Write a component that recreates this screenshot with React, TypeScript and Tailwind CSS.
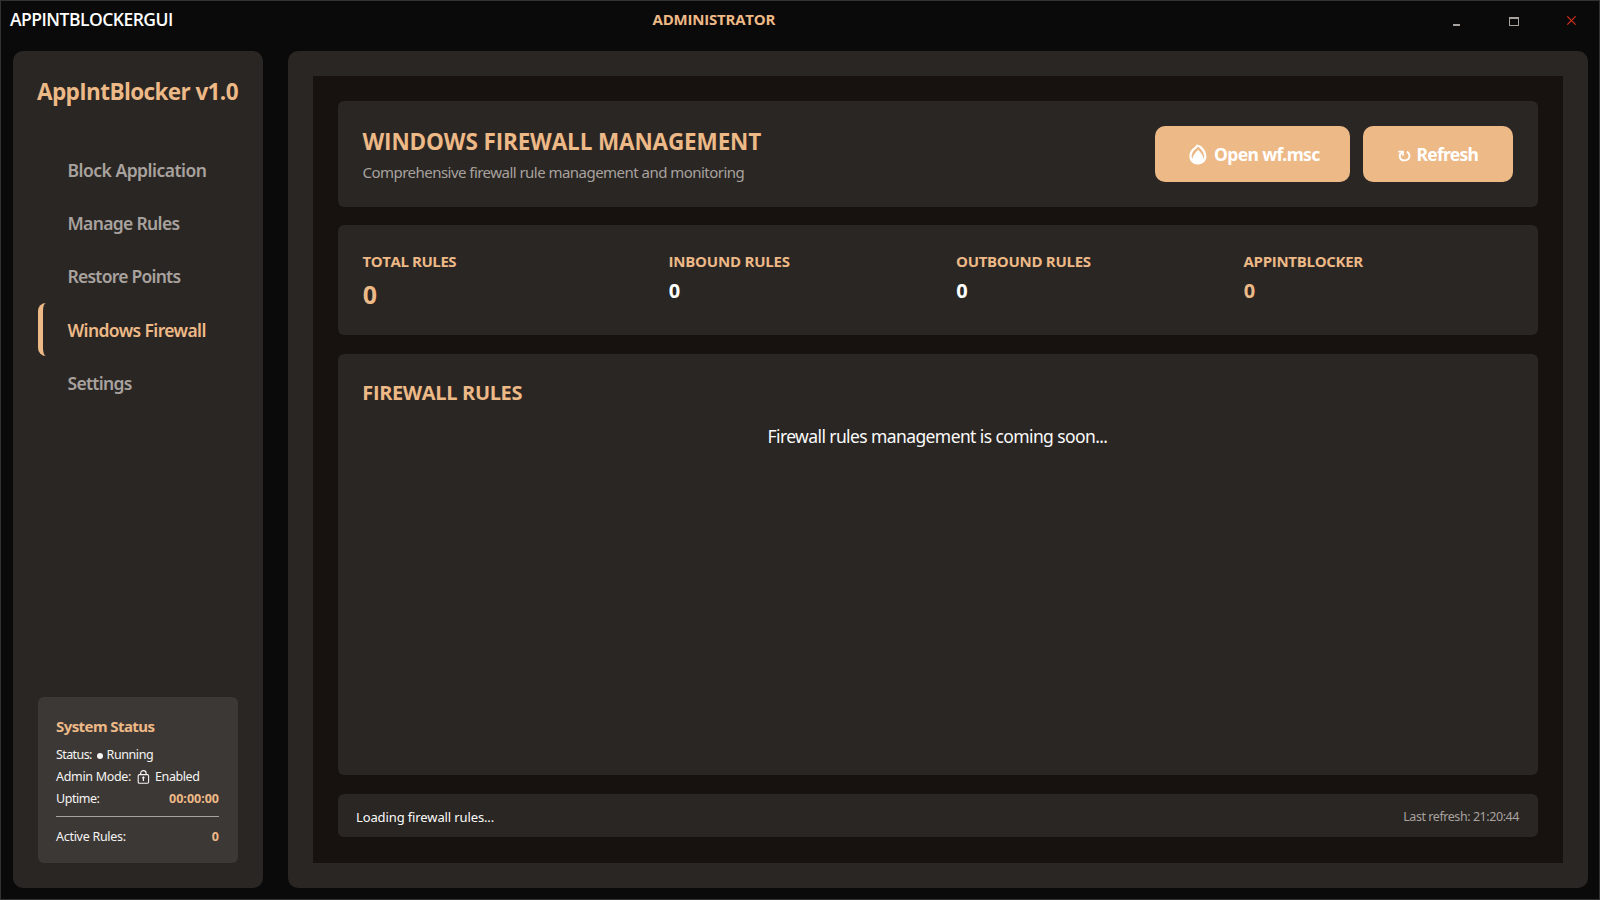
import type { ReactNode } from "react";

function Flame() {
  return (
    <svg width="18" height="21" viewBox="0 0 18 21" fill="none">
      <path
        d="M7.6 0.4 C9.4 0.6 11.2 1.2 12.6 2.6 C15.4 5.3 17.4 8.8 17.4 12.3 C17.4 17.2 13.8 20.4 9 20.4 C4.2 20.4 0.4 17.2 0.4 12.4 C0.4 9 1.8 6.4 3.8 4.6 C5.4 3.2 6.8 2.2 7.6 0.4 Z"
        fill="#fff"
      />
      <path
        d="M8.9 2.5 C11.6 4.2 15.2 8.4 15.2 12.6 C15.2 13.6 15 14.4 14.6 15 C14.2 12 12 9 9.2 6 C6.2 9 3.8 12 3.4 15 C2.8 14.2 2.6 13.4 2.6 12.4 C2.6 9.6 3.8 7.4 5.5 5.9 C7 4.6 8.3 3.8 8.9 2.5 Z"
        fill="#edb987"
      />
      <path d="M9.1 6.2 C11.7 8.8 14.2 11.6 14.2 14.8 C14.2 17.6 12 19.2 9 19.2 C6 19.2 3.8 17.6 3.8 14.8 C3.8 11.6 6.5 8.8 9.1 6.2 Z" fill="#fff" />
    </svg>
  );
}

function Reload() {
  return (
    <svg width="13" height="12" viewBox="0 0 13 12" fill="none" stroke="#fff">
      <path d="M4.4 2.4 C2.2 3.6 1.4 5.6 1.9 7.4 C2.5 9.5 4.2 10.4 6.3 10.4 C9.4 10.4 11.5 8.6 11.5 6 C11.5 4.2 10.6 2.6 9 1.6" strokeWidth="1.9" />
      <path d="M0.3 1.6 H5 V5.8" strokeWidth="1.6" />
    </svg>
  );
}

function Lock() {
  return (
    <svg width="13" height="14" viewBox="0 0 13 14" fill="none" stroke="#f5f5f4">
      <rect x="1.2" y="4.6" width="10.4" height="8.6" rx="1.2" strokeWidth="1.1" />
      <path d="M3.7 4.6 V3.2 C3.7 1.6 4.8 0.7 6.4 0.7 C8 0.7 9.1 1.6 9.1 3.2 V4.6" strokeWidth="1.2" />
      <path d="M6.4 7 V11" strokeWidth="1.2" />
      <circle cx="6.4" cy="7.6" r="0.9" fill="#f5f5f4" strokeWidth="0.6" />
    </svg>
  );
}

const navItems = [
  { label: "Block Application", style: "tracking-[-0.5px]" },
  { label: "Manage Rules", style: "tracking-[-0.66px]" },
  { label: "Restore Points", style: "tracking-[-0.76px]" },
  { label: "Windows Firewall", style: "tracking-[-0.61px]", active: true },
  { label: "Settings", style: "tracking-[-0.7px]" },
];

const stats = [
  { label: "TOTAL RULES", track: "tracking-[-0.43px]", cell: "", value: "text-[25px] leading-[34px] text-[#edb987]" },
  { label: "INBOUND RULES", track: "tracking-[-0.22px]", cell: "pl-[18.5px]", value: "text-[20px] leading-[27px] text-white" },
  { label: "OUTBOUND RULES", track: "tracking-[-0.3px]", cell: "pl-[18.5px]", value: "text-[20px] leading-[27px] text-white" },
  { label: "APPINTBLOCKER", track: "tracking-[-0.3px]", cell: "pl-[18.5px]", value: "text-[20px] leading-[27px] text-[#edb987]" },
];

function TitleBar() {
  return (
    <header className="flex h-[50px] shrink-0 items-start font-['Open_Sans',sans-serif]">
      <h1 className="w-[642.5px] pt-[8px] pl-[9px] text-[17.5px] leading-5 font-semibold tracking-[-0.52px] text-white">APPINTBLOCKERGUI</h1>
      <span className="pt-[8px] pl-[9px] text-[15px] leading-5 font-bold tracking-[-0.21px] text-[#edb987]">ADMINISTRATOR</span>
      <div className="ml-auto flex h-[41px] items-start pr-[23px] pt-[14px]">
        <svg width="126" height="13" viewBox="0 0 126 13">
          <rect x="3" y="9" width="7" height="2" fill="#a8a29e" />
          <path d="M59 2 H69 V11 H59 Z M60 4 V10 H68 V4 Z" fill="#a8a29e" fillRule="evenodd" />
          <path d="M117.3 1.3 L125.7 9.7 M125.7 1.3 L117.3 9.7" stroke="#dc2f22" strokeWidth="1.2" />
        </svg>
      </div>
    </header>
  );
}

function StatusRow({ children }: { children: ReactNode }) {
  return <div className="flex h-[22px] items-start text-[12.5px] leading-[17px] whitespace-nowrap text-[#f5f5f4]">{children}</div>;
}

function Sidebar() {
  return (
    <aside className="flex w-[250px] flex-col rounded-[10px] bg-[#2a2624] px-[25px] pt-[26px] pb-[25px]">
      <h2 className="-ml-px h-[66.5px] font-['Open_Sans',sans-serif] text-[22.5px] leading-[30px] font-bold tracking-[-0.6px] whitespace-nowrap text-[#edb987]">
        AppIntBlocker v1.0
      </h2>
      <nav className="flex flex-col">
        {navItems.map((item) => (
          <a
            key={item.label}
            className={`flex h-[53.2px] items-center rounded-[8px] border-l-[5px] pl-[24.5px] text-[17.5px] leading-6 font-semibold ${item.style} ${
              item.active ? "border-[#edb987] text-[#edb987]" : "border-transparent text-[#a8a29e]"
            }`}
          >
            {item.label}
          </a>
        ))}
      </nav>
      <section className="mt-auto h-[166px] rounded-[6px] bg-[#3c3835] px-[18px] pt-[18.5px]">
        <h3 className="h-[30px] text-[15px] leading-5 font-bold tracking-[-0.58px] text-[#edb987]">System Status</h3>
        <StatusRow>
          <span className="w-[40.5px] tracking-[-0.6px]">Status:</span>
          <span className="mt-[7px] size-[6px] rounded-full bg-[#f5f5f4]" />
          <span className="ml-[4px] tracking-[-0.4px]">Running</span>
        </StatusRow>
        <StatusRow>
          <span className="w-[80.5px] tracking-[-0.32px]">Admin Mode:</span>
          <span className="mt-[2px]">
            <Lock />
          </span>
          <span className="ml-[5.5px] tracking-[-0.4px]">Enabled</span>
        </StatusRow>
        <StatusRow>
          <span className="tracking-[-0.45px]">Uptime:</span>
          <span className="mr-[1px] ml-auto font-bold text-[#edb987]">00:00:00</span>
        </StatusRow>
        <div className="mt-[4px] mb-[11.5px] h-px w-[163px] bg-[#a8a29e]" />
        <StatusRow>
          <span className="tracking-[-0.28px]">Active Rules:</span>
          <span className="mr-[1px] ml-auto font-bold text-[#edb987]">0</span>
        </StatusRow>
      </section>
    </aside>
  );
}

function Content() {
  return (
    <main className="flex w-[1300px] rounded-[10px] bg-[#2a2624] p-[25px]">
      <div className="flex flex-1 flex-col bg-[#17120f] px-[25px] pt-[25px] pb-[26px]">
        <section className="flex h-[106px] items-start rounded-[6px] bg-[#2a2624] p-[25px]">
          <div>
            <h2 className="-ml-[0.5px] font-['Open_Sans',sans-serif] text-[22.5px] leading-[32px] font-bold tracking-[-0.14px] text-[#edb987]">
              WINDOWS FIREWALL MANAGEMENT
            </h2>
            <p className="mt-[4px] -ml-[0.5px] text-[15px] leading-5 tracking-[-0.53px] text-[#a8a29e]">Comprehensive firewall rule management and monitoring</p>
          </div>
          <div className="ml-auto flex gap-[13px] text-[17.5px] leading-6 font-bold text-white">
            <button className="flex h-[56px] w-[195px] items-center rounded-[10px] bg-[#edb987] pl-[33.5px]">
              <Flame />
              <span className="ml-[7.5px] tracking-[-0.62px]">Open wf.msc</span>
            </button>
            <button className="flex h-[56px] w-[150px] items-center rounded-[10px] bg-[#edb987] pl-[35px]">
              <span className="mt-[3px]">
                <Reload />
              </span>
              <span className="ml-[5.5px] tracking-[-0.73px]">Refresh</span>
            </button>
          </div>
        </section>

        <section className="mt-[18px] grid h-[110px] grid-cols-4 rounded-[6px] bg-[#2a2624] px-[25px] pt-[26px]">
          {stats.map((s) => (
            <div key={s.label} className={s.cell}>
              <div className={`-ml-[0.5px] font-['Open_Sans',sans-serif] text-[15px] leading-5 font-bold text-[#edb987] ${s.track}`}>{s.label}</div>
              <div className={`mt-[6px] -ml-[0.25px] font-bold ${s.value}`}>0</div>
            </div>
          ))}
        </section>

        <section className="mt-[19px] flex h-[421px] flex-col rounded-[6px] bg-[#2a2624] px-[25px] pt-[25px]">
          <h3 className="-ml-[0.75px] font-['Open_Sans',sans-serif] text-[20px] leading-[27px] font-bold tracking-[-0.35px] text-[#edb987]">FIREWALL RULES</h3>
          <p className="mt-[18px] -ml-px text-center text-[17.5px] leading-6 tracking-[-0.6px] text-[#fafaf9]">Firewall rules management is coming soon...</p>
        </section>

        <footer className="mt-[19px] flex h-[43px] items-center rounded-[6px] bg-[#2a2624] px-[18px] pt-[2px]">
          <span className="text-[13px] leading-[18px] tracking-[-0.12px] text-[#fafaf9]">Loading firewall rules...</span>
          <span className="mr-[1px] ml-auto text-[12.5px] leading-[17px] tracking-[-0.44px] text-[#a8a29e]">Last refresh: 21:20:44</span>
        </footer>
      </div>
    </main>
  );
}

export default function App() {
  return (
    <div className="flex h-[900px] w-[1600px] flex-col overflow-hidden border border-[#333333] bg-[#0a0a0a] font-['Noto_Sans',sans-serif]">
      <TitleBar />
      <div className="flex h-[837px] gap-[25px] pl-3">
        <Sidebar />
        <Content />
      </div>
    </div>
  );
}
